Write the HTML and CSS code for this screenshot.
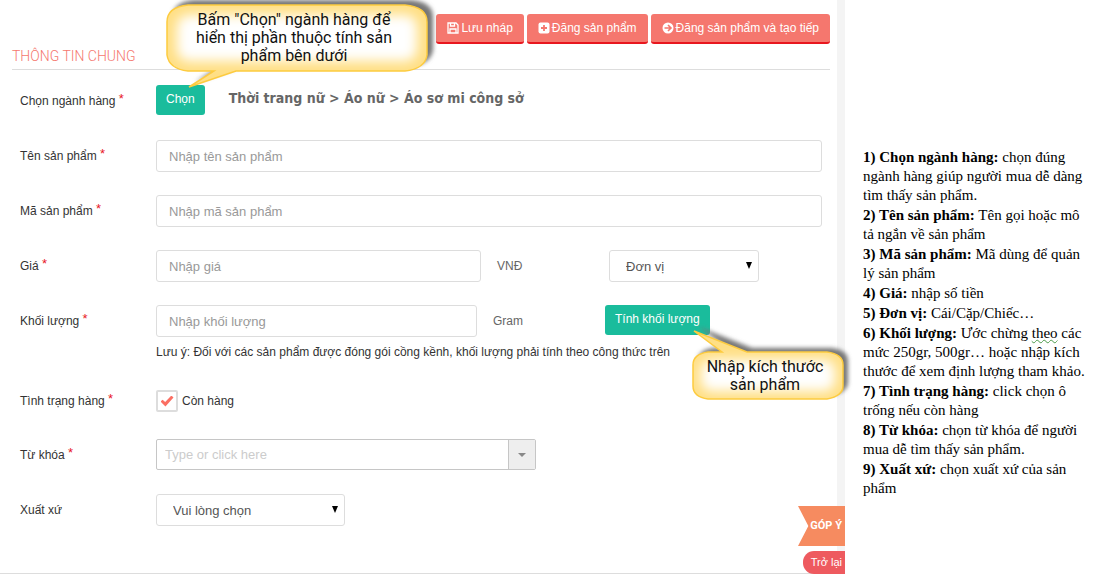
FILE: index.html
```html
<!DOCTYPE html>
<html lang="vi">
<head>
    <meta charset="UTF-8">
    <meta name="viewport" content="width=device-width, initial-scale=1.0">
    <title>Đăng sản phẩm</title>
    <link rel="stylesheet" href="styles.css">
</head>
<body>
    <div class="page">
        <main class="panel">
            <header class="panel-header">
                <h1>THÔNG TIN CHUNG</h1>
                <div class="actions">
                    <button type="button" class="btn-action">
                        <svg width="12" height="12" viewBox="0 0 12 12" fill="none" stroke="#fff" stroke-width="1.300"><path d="M1 1h8l2 2v8H1z"/><path d="M3.500 1v3h4V1M3 11V7h6v4"/></svg>
                        Lưu nháp
                    </button>
                    <button type="button" class="btn-action">
                        <svg width="12" height="12" viewBox="0 0 12 12"><rect x="0.500" y="0.500" width="11" height="11" rx="2" fill="#fff"/><path d="M6 3v6M3 6h6" stroke="#f5776e" stroke-width="1.800"/></svg>
                        Đăng sản phẩm
                    </button>
                    <button type="button" class="btn-action">
                        <svg width="12" height="12" viewBox="0 0 12 12"><circle cx="6" cy="6" r="5.500" fill="#fff"/><path d="M2.500 6h6M6 3l3 3-3 3" fill="none" stroke="#f5776e" stroke-width="1.600"/></svg>
                        Đăng sản phẩm và tạo tiếp
                    </button>
                </div>
            </header>

            <form class="form">
                <div class="row">
                    <label for="category">Chọn ngành hàng <sup>*</sup></label>
                    <div class="field">
                        <button type="button" id="category" class="btn-green">Chọn</button>
                        <strong class="category-path">Thời trang nữ &gt; Áo nữ &gt; Áo sơ mi công sở</strong>
                    </div>
                </div>
                <div class="row">
                    <label for="name">Tên sản phẩm <sup>*</sup></label>
                    <input type="text" id="name" placeholder="Nhập tên sản phẩm">
                </div>
                <div class="row">
                    <label for="code">Mã sản phẩm <sup>*</sup></label>
                    <input type="text" id="code" placeholder="Nhập mã sản phẩm">
                </div>
                <div class="row">
                    <label for="price">Giá <sup>*</sup></label>
                    <div class="field">
                        <input type="text" id="price" class="price" placeholder="Nhập giá">
                        <span class="unit">VNĐ</span>
                        <div class="select unit-select">
                            <select aria-label="Đơn vị"><option>Đơn vị</option></select>
                        </div>
                    </div>
                </div>
                <div class="row">
                    <label for="weight">Khối lượng <sup>*</sup></label>
                    <div>
                        <div class="field">
                            <input type="text" id="weight" class="weight" placeholder="Nhập khối lượng">
                            <span class="unit">Gram</span>
                            <button type="button" class="btn-green">Tính khối lượng</button>
                        </div>
                        <p class="hint">Lưu ý: Đối với các sản phẩm được đóng gói cồng kềnh, khối lượng phải tính theo công thức trên</p>
                    </div>
                </div>
                <div class="row row-check">
                    <span class="label">Tình trạng hàng <sup>*</sup></span>
                    <label class="check"><input type="checkbox" checked> Còn hàng</label>
                </div>
                <div class="row">
                    <label for="keyword">Từ khóa <sup>*</sup></label>
                    <div class="combo">
                        <input type="text" id="keyword" placeholder="Type or click here">
                        <button type="button" aria-label="Mở danh sách"></button>
                    </div>
                </div>
                <div class="row">
                    <label for="origin">Xuất xứ</label>
                    <div class="select origin-select">
                        <select id="origin"><option>Vui lòng chọn</option></select>
                    </div>
                </div>
            </form>

            <a href="#" class="feedback">GÓP Ý</a>
            <a href="#" class="back">Trở lại</a>

            <div class="callout callout-category">
                <svg width="280" height="92" viewBox="0 0 280 92">
                    <defs>
                        <filter id="soft" x="-20%" y="-40%" width="140%" height="180%"><feGaussianBlur stdDeviation="6"/></filter>
                        <filter id="shade" x="-10%" y="-20%" width="120%" height="140%"><feGaussianBlur stdDeviation="2"/></filter>
                        <clipPath id="bubble1"><path d="M23 5H240Q262 7 262 22V55Q260 69 240 71H71L24 87 49 71H23Q4 69 2 55V22Q2 7 23 5Z"/></clipPath>
                    </defs>
                    <path d="M23 5H240Q262 7 262 22V55Q260 69 240 71H71L24 87 49 71H23Q4 69 2 55V22Q2 7 23 5Z" transform="translate(6 -5)" fill="#777" filter="url(#shade)"/>
                    <g clip-path="url(#bubble1)">
                        <rect width="280" height="92" fill="#ffdf85"/>
                        <rect x="12" y="15" width="240" height="46" rx="12" fill="#fff" filter="url(#soft)"/>
                    </g>
                    <path d="M23 5H240Q262 7 262 22V55Q260 69 240 71H71L24 87 49 71H23Q4 69 2 55V22Q2 7 23 5Z" fill="none" stroke="#fdcb3f" stroke-width="1.500"/>
                </svg>
                <p>Bấm "Chọn" ngành hàng để<br>hiển thị phần thuộc tính sản<br>phẩm bên dưới</p>
            </div>
            <div class="callout callout-size">
                <svg width="160" height="78" viewBox="0 0 160 78">
                    <defs>
                        <clipPath id="bubble2"><path d="M17 25H31L3 4 56 25H136Q152 27 152 38V59Q152 69 136 72H17Q2 70 2 59V38Q2 27 17 25Z"/></clipPath>
                    </defs>
                    <path d="M17 25H31L3 4 56 25H136Q152 27 152 38V59Q152 69 136 72H17Q2 70 2 59V38Q2 27 17 25Z" transform="translate(5 -4)" fill="#777" filter="url(#shade)"/>
                    <g clip-path="url(#bubble2)">
                        <rect width="160" height="78" fill="#ffdf85"/>
                        <rect x="10" y="33" width="134" height="31" rx="10" fill="#fff" filter="url(#soft)"/>
                    </g>
                    <path d="M17 25H31L3 4 56 25H136Q152 27 152 38V59Q152 69 136 72H17Q2 70 2 59V38Q2 27 17 25Z" fill="none" stroke="#fdcb3f" stroke-width="1.500"/>
                </svg>
                <p>Nhập kích thước<br>sản phẩm</p>
            </div>
        </main>

        <aside class="notes">
            <p><b>1) Chọn ngành hàng:</b> chọn đúng ngành hàng giúp người mua dễ dàng tìm thấy sản phẩm.</p>
            <p><b>2) Tên sản phẩm:</b> Tên gọi hoặc mô tả ngắn về sản phẩm</p>
            <p><b>3) Mã sản phẩm:</b> Mã dùng để quản lý sản phẩm</p>
            <p><b>4) Giá:</b> nhập số tiền</p>
            <p><b>5) Đơn vị:</b> Cái/Cặp/Chiếc…</p>
            <p><b>6) Khối lượng:</b> Ước chừng <span class="spelling">theo</span> các mức 250gr, 500gr… hoặc nhập kích thước để xem định lượng tham khảo.</p>
            <p><b>7) Tình trạng hàng:</b> click chọn ô trống nếu còn hàng</p>
            <p><b>8) Từ khóa:</b> chọn từ khóa để người mua dễ tìm thấy sản phẩm.</p>
            <p><b>9) Xuất xứ:</b> chọn xuất xứ của sản phẩm</p>
        </aside>
    </div>
</body>
</html>
```

FILE: styles.css
```css
* {
    box-sizing: border-box;
}

body {
    margin: 0;
    background: #fff;
    color: #333;
    font-family: "Liberation Sans", Arial, sans-serif;
    font-size: 12px;
}

p {
    margin: 0;
}

.page {
    display: flex;
    min-height: 100vh;
}

.panel {
    position: relative;
    flex: 1;
    padding: 14px 15px 47px 12px;
    border-bottom: 1px solid #ddd;
    background: linear-gradient(#f4f4f4, #f4f4f4) right / 8px 100% no-repeat;
}

.panel-header {
    display: flex;
    justify-content: space-between;
    align-items: flex-start;
    height: 56px;
    border-bottom: 1px solid #ddd;
}

h1 {
    align-self: flex-end;
    margin: 0;
    color: #f5776e;
    font-family: Roboto, sans-serif;
    font-size: 14px;
    font-weight: 300;
    line-height: 26px;
}

.actions {
    display: flex;
    gap: 3px;
}

button {
    border: none;
    border-radius: 3px;
    color: #fff;
    font-family: inherit;
    font-size: 12px;
    cursor: pointer;
}

.btn-action {
    display: flex;
    align-items: center;
    gap: 2px;
    height: 30px;
    padding: 0 11px;
    border-bottom: 2px solid #e8171f;
    background: #f5776e;
}

.form {
    display: flex;
    flex-direction: column;
    gap: 23px;
    padding: 15px 8px 0;
}

.row {
    display: grid;
    grid-template-columns: 136px 1fr;
    align-items: start;
    min-height: 32px;
}

.row > label,
.row > .label {
    line-height: 32px;
}

sup {
    color: #e8171f;
    font-size: 13px;
    line-height: 0;
    vertical-align: 2px;
}

.field {
    display: flex;
    align-items: center;
}

input[type="text"],
select {
    width: 100%;
    height: 32px;
    padding: 0 12px;
    border: 1px solid #ddd;
    border-radius: 3px;
    background: #fff;
    color: #555;
    font-family: inherit;
    font-size: 13px;
}

input::placeholder {
    color: #999;
}

.btn-green {
    align-self: flex-start;
    height: 30px;
    padding: 0 10px 2px;
    background: #1abc9c;
}

.category-path {
    align-self: flex-start;
    margin-left: 24px;
    color: #666;
    font-family: "DejaVu Sans Condensed", "DejaVu Sans", sans-serif;
    font-size: 14px;
    line-height: 26px;
}

.field .price {
    width: 325px;
}

.field .weight {
    width: 321px;
}

.unit {
    width: 128px;
    padding-left: 16px;
    color: #666;
}

.select {
    position: relative;
}

.select::after {
    content: "";
    position: absolute;
    top: 12px;
    right: 7px;
    border: 3px solid transparent;
    border-top: 7px solid #000;
    border-bottom: none;
    pointer-events: none;
}

select {
    appearance: none;
    padding: 0 16px;
}

.unit-select {
    width: 150px;
}

.origin-select {
    width: 189px;
}

.hint {
    line-height: 30px;
}

.row-check {
    min-height: 26px;
}

.row > .check,
.row-check > .label {
    line-height: 22px;
}

.check {
    display: flex;
    align-items: center;
    gap: 4px;
}

.check input {
    appearance: none;
    display: flex;
    align-items: center;
    justify-content: center;
    width: 22px;
    height: 22px;
    margin: 0;
    border: 2px solid #ddd;
    border-radius: 2px;
    background: #fff;
}

.check input:checked::before {
    content: "";
    width: 13px;
    height: 11px;
    background: #fb6f63;
    clip-path: polygon(0 55%, 16% 38%, 36% 60%, 84% 0, 100% 18%, 38% 100%);
}

.combo {
    display: flex;
    width: 380px;
    height: 31px;
    border: 1px solid #c6c6c6;
    border-radius: 2px;
}

.combo input[type="text"] {
    flex: 1;
    height: auto;
    padding: 0 8px;
    border: none;
}

.combo input::placeholder {
    color: #ccc;
}

.combo button {
    display: flex;
    align-items: center;
    justify-content: center;
    width: 27px;
    padding: 0;
    border-left: 1px solid #c6c6c6;
    border-radius: 0;
    background: #eee;
}

.combo button::before {
    content: "";
    border: 4px solid transparent;
    border-top-color: #888;
    border-bottom: none;
}

/* tabs stuck to the right edge */
.feedback,
.back {
    position: absolute;
    right: 0;
    color: #fff;
    text-align: right;
    text-decoration: none;
    white-space: nowrap;
}

.feedback {
    bottom: 27px;
    width: 47px;
    padding-right: 3px;
    background: #f68b60;
    clip-path: polygon(0 0, 100% 0, 100% 100%, 0 100%, 22% 50%);
    font-family: Roboto, sans-serif;
    font-size: 11px;
    font-weight: bold;
    line-height: 40px;
}

.back {
    bottom: -1px;
    width: 42px;
    padding-right: 3px;
    border-radius: 11px 0 0 11px;
    background: #ee5a5f;
    font-size: 11px;
    line-height: 23px;
}

/* help balloons */
.callout {
    position: absolute;
    color: #111;
    font-family: Roboto, sans-serif;
    font-size: 16px;
    line-height: 18px;
    text-align: center;
    pointer-events: none;
}

.callout svg {
    display: block;
    overflow: visible;
}

.callout p {
    position: absolute;
    left: 0;
    width: 100%;
}

.callout-category {
    top: 0;
    left: 165px;
}

.callout-category p {
    top: 11px;
    padding-right: 22px;
}

.callout-size {
    top: 327px;
    right: -6px;
}

.callout-size p {
    top: 31px;
    padding-right: 12px;
}

.notes {
    display: flex;
    flex-direction: column;
    gap: 1px;
    width: 275px;
    padding: 148px 34px 0 18px;
    color: #000;
    font-family: "Liberation Serif", "Times New Roman", serif;
    font-size: 15px;
    line-height: 19px;
}

.spelling {
    text-decoration: underline wavy #4a9a4a 1px;
}
```
